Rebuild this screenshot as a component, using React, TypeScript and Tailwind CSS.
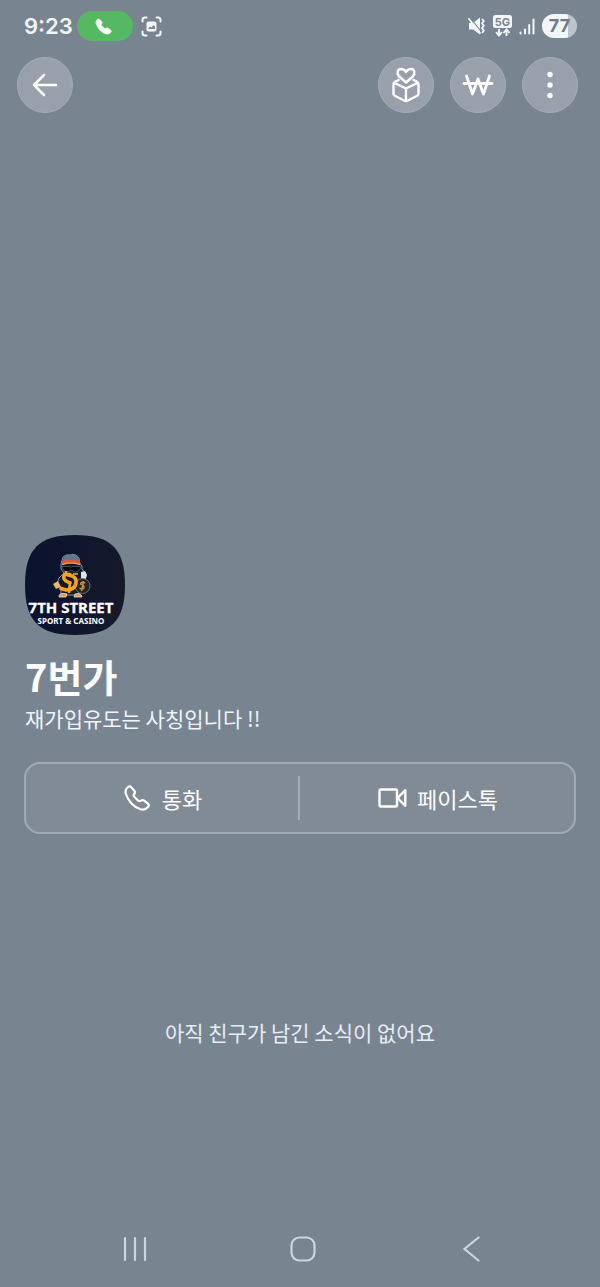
import { ReactNode } from "react";

interface RoundButtonProps {
  label: string;
  children: ReactNode;
}

const handset =
  "M7.3 2.2C6.3 1 4.8 1.1 3.7 2.2C1.8 4 1 6 1.8 8.8C3.8 15.5 9.5 22 16.5 24.2C19.5 25 22.5 24 24.3 21.8C25.2 20.7 25 19.4 23.8 18.5L20.2 15.7C19.2 14.9 18 14.9 17 15.6C15.8 16.4 14.8 16.3 13.7 15.3L10.4 11.8C9.5 10.8 9.5 9.9 10.3 8.8C11.1 7.7 11.2 6.9 10.5 5.9Z";

function RoundButton({ label, children }: RoundButtonProps) {
  return (
    <button
      type="button"
      aria-label={label}
      className="flex h-14 w-14 items-center justify-center rounded-full border border-[#a5aeb7] bg-[#98a1ab] text-white"
    >
      {children}
    </button>
  );
}

function StatusBar() {
  return (
    <div className="flex h-[52px] items-center justify-between pr-[23px] pl-6 text-[#f3f6f9]">
      <div className="flex items-center">
        <span className="w-[53px] text-[22px] leading-7 font-semibold">9:23</span>
        <span className="flex h-[30px] w-14 items-center justify-center rounded-full bg-[#55b963] pr-1">
          <svg width="17" height="17" viewBox="0 0 26 26" fill="white" stroke="white" strokeWidth="1">
            <path d={handset} />
          </svg>
        </span>
        <svg className="ml-2" width="21" height="21" viewBox="0 0 21 21" fill="none" stroke="currentColor" strokeWidth="2" strokeLinecap="round">
          <path d="M1.5 5.5V4Q1.5 1.5 4 1.5H5.5M15.5 1.5H17Q19.5 1.5 19.5 4V5.5M19.5 15.5V17Q19.5 19.5 17 19.5H15.5M5.5 19.5H4Q1.5 19.5 1.5 17V15.5" />
          <path fillRule="evenodd" d="M7.5 5.5H13.5Q15.5 5.5 15.5 7.5V13.5Q15.5 15.5 13.5 15.5H7.5Q5.5 15.5 5.5 13.5V7.5Q5.5 5.5 7.5 5.5ZM7 13L9 10.5L10.5 11.5L12.5 9L14 10.5V13Z" fill="currentColor" stroke="none" />
        </svg>
      </div>

      <div className="flex items-center gap-[7px]">
        <svg width="18" height="18" viewBox="0 0 18 18" fill="none" stroke="currentColor" strokeWidth="1.8">
          <path d="M1 6H5L12 0.5V17.5L5 12.5H1Z" fill="currentColor" stroke="none" />
          <path d="M2.5 1L13 14.5" stroke="#78848f" strokeWidth="1.2" />
          <path d="M1 2L12 16" strokeLinecap="round" />
          <path d="M14 2L15.8 4L14 6.3L15.8 8.7L14 11L15.8 13.4L14 16" />
        </svg>
        <svg width="19" height="22" viewBox="0 0 19 22">
          <rect width="19" height="13" rx="2.5" fill="currentColor" />
          <text x="9.5" y="10.5" textAnchor="middle" fontSize="11" fontWeight="700" fill="#78848f">5G</text>
          <path d="M6 14V20M3 17L6 20.5L9 17M13.5 21V15M10.5 18L13.5 14.5L16.5 18" fill="none" stroke="currentColor" strokeWidth="1.9" />
        </svg>
        <svg width="16" height="17" viewBox="0 0 16 17" fill="none" stroke="currentColor" strokeWidth="2" strokeLinecap="round">
          <path d="M1.5 14.5V15.5M6 11.5V15.5M10.2 7V15.5M14.5 1.5V15.5" />
        </svg>
        <span className="flex h-6 w-[35px] items-center justify-center rounded-full bg-linear-to-r from-[#f3f6f9] from-75% to-[#bdc5cc] to-75% text-lg leading-6 font-bold text-[#6f7b86]">
          77
        </span>
      </div>
    </div>
  );
}

function Avatar() {
  return (
    <svg className="block" width="100" height="100" viewBox="0 0 100 100" role="img" aria-label="7TH STREET">
      <defs>
        <clipPath id="avatar">
          <path d="M50 0C86 0 100 14 100 50S86 100 50 100S0 86 0 50S14 0 50 0Z" />
        </clipPath>
        <linearGradient id="night">
          <stop offset="0" stopColor="#0b1230" />
          <stop offset="1" stopColor="#15192a" />
        </linearGradient>
      </defs>
      <g clipPath="url(#avatar)">
        <rect width="100" height="100" fill="url(#night)" />
        {/* mascot */}
        <path d="M36 29L38 22Q41 19 45 20Q51 18 54 23L55 29Q58 30 57 34L61 39L60 46L52 60H36L36 52L31 51L34 43L39 38L36 34Z" fill="#141b27" stroke="#8298ab" strokeWidth="1" />
        <path d="M38 24Q40 19 45 20Q51 18 54 24L54 26H38Z" fill="#5f788b" />
        <path d="M37 26Q46 23 55 26V29Q46 26 37 29Z" fill="#dc5938" />
        <path d="M37 29.5Q46 26.5 55 29.5" stroke="#e7a340" strokeWidth="1.4" fill="none" />
        <path d="M37 31.5H45L46 32.5L47 31.5H56Q55 37 50 37L46 35L42 37Q38 36 37 31.5Z" fill="#05080e" stroke="#59616c" strokeWidth="0.7" />
        <path d="M48 39H53" stroke="#c9b59a" strokeWidth="1.5" />
        <path d="M56 37L60 36L62 40L60 46L56 44Z" fill="#dfe4e8" />
        <circle cx="57.5" cy="51" r="7.5" fill="#1f2528" stroke="#66737c" strokeWidth="1" />
        <path d="M60 48Q56 46 55.5 49Q59.5 50 59 53Q57 55 54.5 53M58.5 46L56.5 56" fill="none" stroke="#c9922f" strokeWidth="1.4" />
        {/* dollar sign */}
        <path d="M45 39.5L40 39.5Q37 43 41 46L45 48M43 40Q52 41 51 48Q50 55 41 55L36 53.5" fill="none" stroke="#f5a51d" strokeWidth="3.6" strokeLinecap="round" />
        <path d="M41 36V41M45 46L44 58" stroke="#f5a51d" strokeWidth="2.6" />
        <path d="M28 49L33 46L36 52L31 54Z" fill="#edb55d" />
        <path d="M34 61Q35 57 42 59L41 62H34ZM49 62L50 59Q56 57 57 62Z" fill="#e49a55" stroke="#e9dfd0" strokeWidth="0.8" />
        <text x="46" y="78" textAnchor="middle" fontSize="15" fontWeight="700" fill="white" stroke="white" strokeWidth="0.3" className="font-['Noto_Sans',sans-serif]">7TH STREET</text>
        <text x="46" y="89" textAnchor="middle" fontSize="8" fontWeight="700" fill="white" className="font-['Noto_Sans',sans-serif]">SPORT &amp; CASINO</text>
      </g>
    </svg>
  );
}

export default function App() {
  return (
    <div className="flex min-h-screen flex-col bg-[#78848f] font-[Inter,'Noto_Sans_CJK_KR',sans-serif]">
      <StatusBar />

      <header className="mt-[5px] flex justify-between pl-[17px] pr-[22px]">
        <RoundButton label="뒤로">
          <svg width="26" height="26" viewBox="0 0 26 26" fill="none" stroke="currentColor" strokeWidth="2.5" strokeLinecap="round" strokeLinejoin="round">
            <path d="M24 13H2M12 3L2 13L12 23" />
          </svg>
        </RoundButton>
        <div className="flex gap-4">
          <RoundButton label="선물하기">
            <svg width="28" height="36" viewBox="0 0 28 36" fill="none" stroke="currentColor" strokeWidth="2.4" strokeLinecap="round" strokeLinejoin="round" className="shrink-0">
              <path d="M14 15.5L7.2 9.5C4.5 6.5 5.2 2 9 2C11.5 2 13 3.2 14 5C15 3.2 16.5 2 19 2C22.8 2 23.5 6.5 20.8 9.5Z" />
              <path d="M6.5 13L3 14.8Q1.5 15.6 1.5 17.2V26.5Q1.5 28 2.8 28.7L12.6 33.7Q14 34.4 15.4 33.7L25.2 28.7Q26.5 28 26.5 26.5V17.2Q26.5 15.6 25 14.8L21.5 13" />
              <path d="M2.5 16L14 21.5L25.5 16M14 21.5V33.5" />
            </svg>
          </RoundButton>
          <RoundButton label="송금">
            <svg width="32" height="22" viewBox="0 0 32 22" fill="none" stroke="currentColor" strokeWidth="2.8" strokeLinecap="round" strokeLinejoin="round">
              <path d="M4.5 2L10.5 20L16 5L21.5 20L27.5 2M2 9.5H30" />
            </svg>
          </RoundButton>
          <RoundButton label="더보기">
            <svg width="6" height="28" viewBox="0 0 6 28" fill="currentColor">
              <circle cx="3" cy="3.5" r="2.7" />
              <circle cx="3" cy="14" r="2.7" />
              <circle cx="3" cy="24.5" r="2.7" />
            </svg>
          </RoundButton>
        </div>
      </header>

      <main className="flex flex-1 flex-col justify-end px-6 font-['Noto_Sans_CJK_KR',sans-serif] text-white">
        <div className="pl-px">
          <Avatar />
          <h1 className="mt-[15px] text-[38px] leading-[52px] font-bold">7번가</h1>
          <p className="mt-0.5 text-[21px] leading-7 text-[#f0f4f8]">재가입유도는 사칭입니다 !!</p>
        </div>

        <div className="mt-[30px] grid grid-cols-2 rounded-2xl border-2 border-[#a1abb5] bg-[#808b96] py-3">
          <button type="button" className="flex h-11 items-center justify-center gap-3 border-r-2 border-[#a1abb5] pl-0.5 text-[22px] leading-8">
            <svg width="26" height="26" viewBox="0 0 26 26" fill="none" stroke="currentColor" strokeWidth="2.2" strokeLinejoin="round">
              <path d={handset} />
            </svg>
            통화
          </button>
          <button type="button" className="flex h-11 items-center justify-center gap-[10px] pl-0.5 text-[22px] leading-8">
            <svg width="29" height="20" viewBox="0 0 29 20" fill="none" stroke="currentColor" strokeWidth="2.4" strokeLinejoin="round">
              <rect x="1.5" y="1.5" width="17.5" height="17" rx="1.5" />
              <path d="M27.3 2.2V17.8L21 11.5Q19.7 10 21 8.5Z" />
            </svg>
            페이스톡
          </button>
        </div>

        <p className="mt-[182px] mb-[163px] text-center text-[21px] leading-8 text-[#e6edf4]">
          아직 친구가 남긴 소식이 없어요
        </p>
      </main>

      <nav className="grid h-[76px] grid-cols-3 pl-[51px] pr-[45px] text-[#cbd5dd]">
        <button type="button" aria-label="최근 앱" className="flex items-center justify-center">
          <svg width="24" height="26" viewBox="0 0 24 26" stroke="currentColor" strokeWidth="2.2" strokeLinecap="round">
            <path d="M2 2V24M12 2V24M22 2V24" />
          </svg>
        </button>
        <button type="button" aria-label="홈" className="flex items-center justify-center">
          <svg width="26" height="26" viewBox="0 0 26 26" fill="none" stroke="currentColor" strokeWidth="2.2">
            <rect x="1.5" y="1.5" width="23" height="23" rx="8" />
          </svg>
        </button>
        <button type="button" aria-label="이전" className="flex items-center justify-center">
          <svg width="17" height="26" viewBox="0 0 17 26" fill="none" stroke="currentColor" strokeWidth="2.2" strokeLinecap="round">
            <path d="M15.5 1.5L1.5 13L15.5 24.5" />
          </svg>
        </button>
      </nav>
    </div>
  );
}
